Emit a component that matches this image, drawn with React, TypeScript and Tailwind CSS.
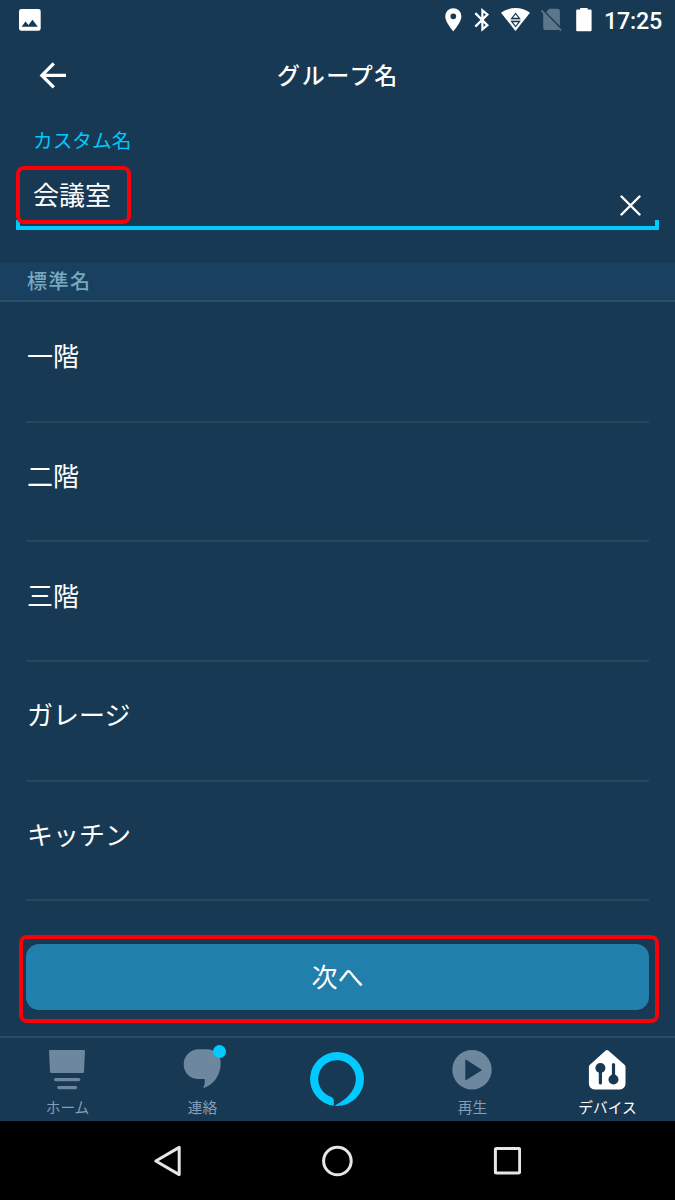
import React, { useState } from "react";
import clsx from "clsx";

// 標準名リスト
const presetNames: string[] = ["一階", "二階", "三階", "ガレージ", "キッチン"];

// ---------------------------------------------------------
// ステータスバー
// ---------------------------------------------------------
function StatusBar() {
  return (
    <div className="flex h-10 items-start pt-2 pl-[19px] pr-[13px] text-white">
      <svg className="mt-px h-[22px] w-[22px]" viewBox="0 0 22 22" fill="currentColor">
        <path
          fillRule="evenodd"
          d="M2.4 0h17A2.3 2.3 0 0 1 21.7 2.4v17a2.3 2.3 0 0 1-2.3 2.3h-17A2.4 2.4 0 0 1 0 19.4v-17A2.4 2.4 0 0 1 2.4 0zM2.6 17.7h16.2l-5.3-6.9-4 5.1-3-3.3z"
        />
      </svg>

      <svg className="ml-auto h-6 w-[17px]" viewBox="0 0 17 24" fill="currentColor">
        <path
          fillRule="evenodd"
          d="M8.3.2A8.1 8.1 0 0 0 .2 8.3c0 6.1 8.1 15.1 8.1 15.1s8.1-9 8.1-15.1A8.1 8.1 0 0 0 8.3.2zm0 5.2a2.9 2.9 0 1 1 0 5.8 2.9 2.9 0 0 1 0-5.8z"
        />
      </svg>
      <svg className="ml-3 h-6 w-4" viewBox="0 0 16 24" fill="none" stroke="currentColor" strokeWidth="2.2">
        <path d="M1.3 5.1 13.4 17.2 8.4 21.4V2.3L13.4 6.5 1.3 18.6" />
      </svg>
      <svg className="ml-[11px] h-6 w-[30px]" viewBox="0 0 30 24">
        <path d="M0 4.8C4 1.7 9 .1 14.5.1S25 1.7 29 4.8L14.5 23z" fill="currentColor" />
        <path
          d="M10.8 10.3h7.6l-3.8-4.8zM10.8 13.7h7.6l-3.8 4.8z"
          fill="none"
          stroke="#173953"
          strokeWidth="1.2"
        />
        <path d="M9.6 12h10" stroke="#173953" strokeWidth="0.7" />
      </svg>
      <svg className="ml-[10px] h-6 w-[21px] text-[#5d768a]" viewBox="0 0 21 24" fill="currentColor">
        <path d="M8.3.8h8.4a2.2 2.2 0 0 1 2.2 2.2v15.1L5 4.1zM2.2 4.3l16.4 16.7q-.7 1-1.9 1H4.4a2.2 2.2 0 0 1-2.2-2.2z" />
        <path d="M.5 2.6 20.2 22.6" stroke="currentColor" strokeWidth="1.8" />
      </svg>
      <svg className="ml-[14px] h-6 w-4" viewBox="0 0 16 24" fill="currentColor">
        <path d="M4.2 0h7.4v1.6h3a1 1 0 0 1 1 1v19.7a1 1 0 0 1-1 1H1.2a1 1 0 0 1-1-1V2.6a1 1 0 0 1 1-1h3z" />
      </svg>
      <span className="ml-[12px] w-[58px] whitespace-nowrap font-[Roboto,sans-serif] text-[23.3px] font-medium leading-[26px] tracking-[-0.2px]">
        17:25
      </span>
    </div>
  );
}

// ---------------------------------------------------------
// 下部タブのアイコン
// ---------------------------------------------------------
function HomeIcon() {
  return (
    <svg className="h-10 w-10" viewBox="0 0 40 40" fill="currentColor">
      <path d="M3 0h34q1 0 1 1l-1 20.5Q37 23 35.5 23h-31Q3 23 3 21.5L2 1q0-1 1-1z" />
      <rect x="7" y="28" width="26.3" height="3.2" rx="1.6" />
      <rect x="10.2" y="36" width="20" height="3.2" rx="1.6" />
    </svg>
  );
}

function ChatIcon() {
  return (
    <svg className="h-10 w-10 overflow-visible" viewBox="0 0 40 40" fill="currentColor">
      <path d="M16.5-.8h8.3A13.7 13.7 0 0 1 38.7 13c0 12.3-7.4 22.3-17.6 25.3 1.4-3.2 2-5.7 1.6-9.2h-6.2A14.6 14.6 0 0 1 1.7 14.2 15 15 0 0 1 16.5-.8z" />
    </svg>
  );
}

function PlayIcon() {
  return (
    <svg className="h-10 w-10" viewBox="0 0 40 40" fill="currentColor">
      <path
        fillRule="evenodd"
        d="M20 0a19.7 19.7 0 1 1 0 39.4A19.7 19.7 0 0 1 20 0zm-6.7 10.2v19.4q0 1 .9.5l15.2-9.6q.7-.6 0-1.1L14.2 9.7q-.9-.5-.9.5z"
      />
    </svg>
  );
}

function DevicesIcon() {
  return (
    <svg className="h-10 w-10" viewBox="0 0 40 40">
      <path
        d="M18.7.6q1.3-1.2 2.6 0L37.5 14.8q1 .9 1 2.3v16.7a5.6 5.6 0 0 1-5.6 5.6H7.5a5.6 5.6 0 0 1-5.6-5.6V17.1q0-1.4 1-2.3z"
        fill="currentColor"
      />
      <g fill="#173953" stroke="#173953" strokeLinecap="round">
        <circle cx="13.4" cy="18" r="5" stroke="none" />
        <circle cx="26.5" cy="29.5" r="5" stroke="none" />
        <path d="M13.4 18v15M26.5 29V14.6" strokeWidth="3.2" />
      </g>
    </svg>
  );
}

type TabProps = {
  label: string;
  icon: React.ReactNode;
  active?: boolean;
  badge?: boolean;
};

function Tab({ label, icon, active, badge }: TabProps) {
  return (
    <button
      className={clsx(
        "flex flex-col items-center pt-3",
        active ? "text-white" : "text-[#6d879e]"
      )}
    >
      <span className="relative mr-px">
        {icon}
        {badge && (
          <span className="absolute -top-[5px] left-[31px] h-[13px] w-[13px] rounded-full bg-[#00caff]" />
        )}
      </span>
      <span
        className={clsx(
          "mt-[7px] whitespace-nowrap text-[14.7px] leading-5",
          !active && "text-[#849db8]"
        )}
      >
        {label}
      </span>
    </button>
  );
}

// ---------------------------------------------------------
// メイン（グループ名の選択画面）
// ---------------------------------------------------------
export default function App() {
  const [name, setName] = useState<string>("会議室");

  return (
    <div className="flex h-[1200px] w-[675px] flex-col overflow-hidden bg-[#173953] font-['Noto_Sans_CJK_JP',sans-serif] text-white">
      <StatusBar />

      <header className="grid h-[70px] grid-cols-[80px_1fr_80px] items-center">
        <button className="pl-[39px]">
          <svg className="h-7 w-7" viewBox="0 0 28 28" fill="none" stroke="currentColor" strokeWidth="3.3">
            <path d="M27 14.4H3M14.8 2.4 2.9 14.4l11.9 12" />
          </svg>
        </button>
        <h1 className="pb-[3px] pl-px text-center text-[23px] font-medium leading-8 tracking-[1.7px]">
          グループ名
        </h1>
      </header>

      {/* カスタム名の入力 */}
      <section className="flex h-[153px] flex-col px-4 pt-4">
        <div className="ml-[17px] text-[19.7px] leading-7 text-[#00caff]">カスタム名</div>
        <div className="mt-3 flex h-[58px] items-start justify-between">
          <div className="relative z-10 flex h-[58px] w-[115px] items-center rounded-[8px] border-4 border-[#fb0007] pb-[2px] pl-[13px] text-[26px] leading-none">
            {name}
          </div>
          <button className="mr-[18px] mt-[29px]" onClick={() => setName("")}>
            <svg className="h-[21px] w-[21px]" viewBox="0 0 21 21" fill="none" stroke="currentColor" strokeWidth="2.4" strokeLinecap="round">
              <path d="M1.5 1.5l18 18M19.5 1.5l-18 18" />
            </svg>
          </button>
        </div>
        <div className="-mt-1 h-[10px] w-[643px] shrink-0 border-x-4 border-b-4 border-[#00caff]" />
      </section>

      {/* 標準名 */}
      <h2 className="h-[39px] border-b-2 border-[#2b5069] bg-[#1a4060] pl-[27px] text-[20px] font-medium leading-9 tracking-[1.5px] text-[#76a9c0]">
        標準名
      </h2>
      <ul className="px-[26px] pt-px">
        {presetNames.map((preset) => (
          <li
            key={preset}
            className="flex h-[119.7px] cursor-pointer items-center border-b-2 border-[#27475f] pb-[13.4px] pl-px text-[26px] leading-none"
            onClick={() => setName(preset)}
          >
            {preset}
          </li>
        ))}
      </ul>

      <div className="ml-[19px] mt-auto h-[88px] w-[640px] shrink-0 rounded-[8px] border-4 border-[#fb0007] pl-[3px] pt-[5px]">
        <button className="h-[66px] w-[623px] rounded-[13px] bg-[#2180ab] pb-[2px] text-[26px] leading-none">
          次へ
        </button>
      </div>

      <nav className="mt-[13px] grid h-[85px] shrink-0 grid-cols-5 border-t-2 border-[#2a4b68]">
        <Tab label="ホーム" icon={<HomeIcon />} />
        <Tab label="連絡" icon={<ChatIcon />} badge />
        <button className="flex justify-center pt-[14px]">
          <svg className="mr-px h-[54px] w-[54px]" viewBox="0 0 54 54">
            <path
              fillRule="evenodd"
              fill="#00caff"
              d="M27 0a27 27 0 0 1 0 54q-1.8 0-2.3-.4C33 49.5 45.8 40.5 45.8 27A18.8 18.8 0 1 0 20.7 44.7Q23.8 45.8 23.8 48.6V53.8A27 27 0 0 1 27 0z"
            />
          </svg>
        </button>
        <Tab label="再生" icon={<PlayIcon />} />
        <Tab label="デバイス" icon={<DevicesIcon />} active />
      </nav>

      {/* Android のナビゲーションバー */}
      <div className="flex h-[79px] shrink-0 items-center bg-black text-[#e6e6e6]">
        <svg className="ml-[153px] h-8 w-[30px]" viewBox="0 0 30 32" fill="none" stroke="currentColor" strokeWidth="3" strokeLinejoin="round">
          <path d="M2.8 16 26.2 2.4v27.2z" />
        </svg>
        <svg className="ml-[138px] h-8 w-8" viewBox="0 0 32 32" fill="none" stroke="currentColor" strokeWidth="3">
          <circle cx="16.4" cy="16" r="13.8" />
        </svg>
        <svg className="ml-[140px] h-8 w-7" viewBox="0 0 28 32" fill="none" stroke="currentColor" strokeWidth="3">
          <rect x="2.4" y="3.6" width="24.3" height="24.3" rx="1" />
        </svg>
      </div>
    </div>
  );
}
